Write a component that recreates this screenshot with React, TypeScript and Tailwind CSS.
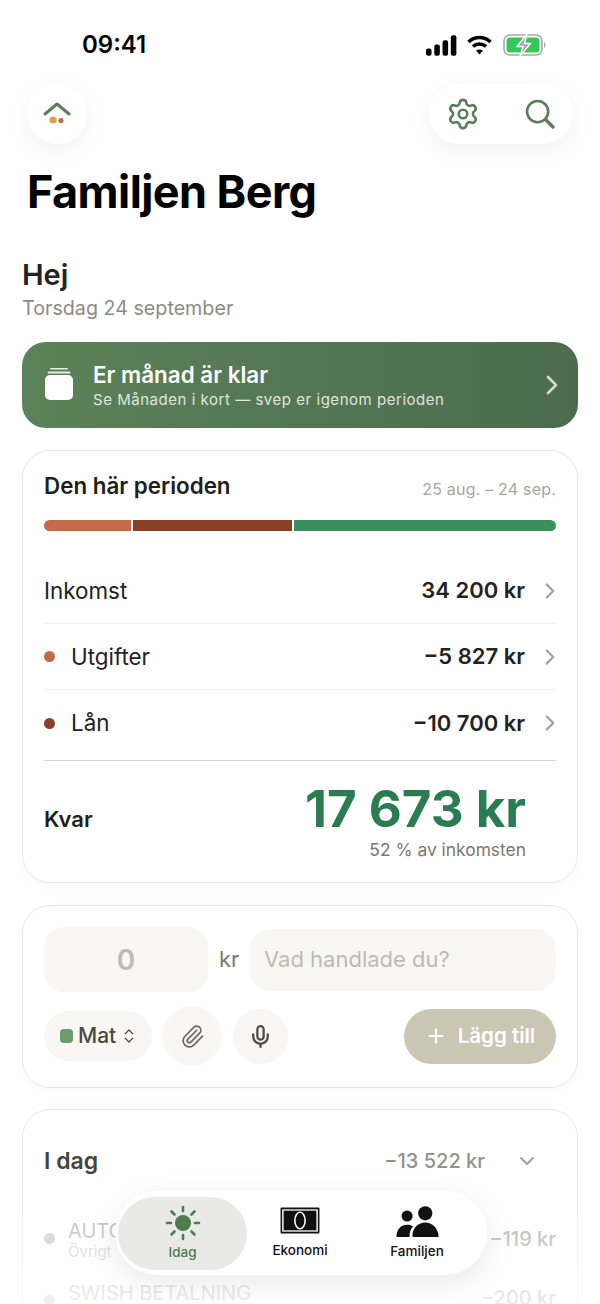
import { ChevronDown, ChevronRight, ChevronsUpDown, Mic, Paperclip, Plus, Settings } from 'lucide-react'

const rows = [
  { label: 'Inkomst', amount: '34 200 kr', dot: '' },
  { label: 'Utgifter', amount: '−5 827 kr', dot: 'bg-[#c4694a]' },
  { label: 'Lån', amount: '−10 700 kr', dot: 'bg-[#8a3f28]' },
]

function StatusBar() {
  return (
    <div className="flex h-[84px] items-start justify-between pl-[82px] pr-[54px] pt-[30px]">
      <span className="text-[24px] leading-[30px] font-semibold text-black">09:41</span>
      <div className="flex items-center gap-[9px] pt-[4px]">
        <svg width="31" height="21" viewBox="0 0 30 20" fill="#000">
          <rect x="0" y="13" width="5.4" height="7" rx="2" />
          <rect x="8" y="9" width="5.4" height="11" rx="2" />
          <rect x="16" y="5" width="5.4" height="15" rx="2" />
          <rect x="24" y="0" width="5.4" height="20" rx="2" />
        </svg>
        <svg width="27" height="20" viewBox="0 0 26 20" fill="none" stroke="#000" strokeWidth="3.4">
          <path d="M2 7 C8 1 18 1 24 7" />
          <path d="M6.5 11.5 C10 8.2 16 8.2 19.5 11.5" />
          <path d="M13 19.5 L9.6 15.6 C11.6 14 14.4 14 16.4 15.6 Z" fill="#000" stroke="none" />
        </svg>
        <svg width="43" height="22" viewBox="0 0 43 22" fill="none" className="ml-[1px]">
          <rect x="1" y="1" width="38" height="20" rx="6" stroke="#a8a8a8" strokeWidth="1.6" />
          <rect x="3.5" y="3.5" width="33" height="15" rx="3.5" fill="#34c759" />
          <path d="M41 8 C43 8.5 43 13.5 41 14 Z" fill="#a8a8a8" />
          <path d="M24 0 L14 12.5 H20 L17 22 L27.5 9.5 H21.5 Z" fill="#a9a9a9" stroke="#fff" strokeWidth="1.4" />
        </svg>
      </div>
    </div>
  )
}

function Header() {
  return (
    <div className="flex items-center justify-between pl-[27px] pr-[27px]">
      <div className="flex h-[60px] w-[60px] items-center justify-center rounded-full bg-white shadow-[0_6px_24px_rgba(0,0,0,0.06)]">
        <svg width="28" height="24" viewBox="0 0 28 24" fill="none">
          <path d="M2 12 L14 2 L26 12" stroke="#5a7d5a" strokeWidth="3" strokeLinecap="round" strokeLinejoin="round" />
          <circle cx="10" cy="18" r="3.6" fill="#dd9f50" />
          <circle cx="18" cy="18.5" r="2.6" fill="#c4694a" />
        </svg>
      </div>
      <div className="flex h-[60px] w-[144px] items-center justify-between rounded-full bg-white pl-[17px] pr-[18px] shadow-[0_6px_24px_rgba(0,0,0,0.06)]">
        <Settings size={34} strokeWidth={1.8} className="text-[#5a7d5a]" />
        <svg width="30" height="30" viewBox="0 0 30 30" fill="none" stroke="#5a7d5a" strokeWidth="2.6" strokeLinecap="round">
          <circle cx="12.6" cy="12.6" r="10.6" />
          <path d="M20.4 20.4 L28 28" strokeWidth="3.4" />
        </svg>
      </div>
    </div>
  )
}

function PeriodCard() {
  return (
    <section className="mt-[22px] h-[433px] rounded-[28px] border border-[#e9e7e1] bg-white px-[21px] shadow-[0_4px_14px_rgba(0,0,0,0.025)]">
      <div className="flex items-center justify-between pt-[20px]">
        <span className="text-[22.4px] leading-[30px] font-semibold text-[#1e1e1c]">Den här perioden</span>
        <span className="pt-[5px] text-[16px] tracking-[0.2px] text-[#a8a69c]">25 aug. – 24 sep.</span>
      </div>
      <div className="mt-[19px] flex h-[11px] gap-[2px] overflow-hidden rounded-full">
        <div className="w-[87px] bg-[#c4694a]" />
        <div className="w-[159px] bg-[#8a3f28]" />
        <div className="flex-1 bg-[#3a8f5c]" />
      </div>
      <div className="mt-[27px]">
        {rows.map((r, i) => (
          <div key={r.label} className={`flex h-[66px] items-center ${i < 2 ? 'border-b border-[#f2f1ed]' : ''}`}>
            {r.dot && <span className={`mr-[16px] h-[11px] w-[11px] rounded-full ${r.dot}`} />}
            <span className="flex-1 text-[22.4px] text-[#23231f]">{r.label}</span>
            <span className="text-[22px] font-semibold text-[#23231f]">{r.amount}</span>
            <ChevronRight size={26} strokeWidth={2} className="ml-[12px] -mr-[7px] text-[#a3a195]" />
          </div>
        ))}
      </div>
      <div className="mt-[4px] flex h-[116px] items-start justify-between border-t border-[#d6d4cb]">
        <span className="pt-[44px] text-[22px] leading-[28px] font-semibold text-[#1e1e1c]">Kvar</span>
        <div className="mr-[30px] flex flex-col items-end pt-[18px]">
          <span className="text-[51px] leading-[60px] font-bold text-[#2a7d50]">17 673 kr</span>
          <span className="text-[17.4px] leading-[22px] text-[#7b796f]">52 % av inkomsten</span>
        </div>
      </div>
    </section>
  )
}

function AddCard() {
  return (
    <section className="mt-[22px] h-[183px] rounded-[28px] border border-[#e9e7e1] bg-white px-[21px] pt-[21px] shadow-[0_4px_14px_rgba(0,0,0,0.025)]">
      <div className="flex items-center">
        <div className="flex h-[65px] w-[164px] items-center justify-center rounded-[20px] bg-[#f8f7f3] text-[28px] font-semibold text-[#bdbbb2]">0</div>
        <span className="ml-[11px] w-[31px] text-[22px] text-[#7b796f]">kr</span>
        <div className="flex h-[62px] flex-1 items-center rounded-[20px] bg-[#f8f7f3] pl-[14px] text-[22px] text-[#bdbbb2]">Vad handlade du?</div>
      </div>
      <div className="mt-[14px] flex items-center">
        <div className="flex h-[50px] w-[108px] items-center rounded-full bg-[#f8f7f3] pl-[16px]">
          <span className="h-[14px] w-[13px] rounded-[4px] bg-[#6f9a70]" />
          <span className="ml-[5px] text-[21px] font-medium text-[#4a4a42]">Mat</span>
          <ChevronsUpDown size={18} strokeWidth={1.6} className="ml-[4px] text-[#4a4a42]" />
        </div>
        <div className="ml-[10px] flex h-[60px] w-[60px] items-center justify-center rounded-full bg-[#f8f7f3]">
          <Paperclip size={25} strokeWidth={1.6} className="text-[#6a685e]" />
        </div>
        <div className="ml-[11px] flex h-[55px] w-[55px] items-center justify-center rounded-full bg-[#f8f7f3]">
          <Mic size={25} strokeWidth={2.2} className="text-[#4f4d45]" />
        </div>
        <div className="ml-auto flex h-[55px] w-[152px] items-center justify-center gap-[11px] rounded-full bg-[#ccc6b5] text-[20.5px] font-semibold text-white">
          <Plus size={22} strokeWidth={2.4} />
          <span>Lägg till</span>
        </div>
      </div>
    </section>
  )
}

function TodayCard() {
  return (
    <section className="mt-[21px] h-[260px] rounded-[28px] border border-[#e9e7e1] bg-white px-[21px] pt-[34px]">
      <div className="flex items-center">
        <span className="flex-1 text-[23px] font-semibold text-[#45443d]">I dag</span>
        <span className="text-[20px] font-medium text-[#94928a]">−13 522 kr</span>
        <ChevronDown size={24} strokeWidth={2} className="ml-[30px] mr-[17px] text-[#a3a195]" />
      </div>
      <div className="mt-[40px] flex items-start opacity-70">
        <span className="mt-[14px] h-[11px] w-[11px] rounded-full bg-[#b3b1a9]" />
        <div className="ml-[13px] flex-1">
          <div className="text-[20px] leading-[24px] text-[#9a9890]">AUTOGIRO</div>
          <div className="text-[15px] leading-[18px] text-[#bdbbb2]">Övrigt</div>
        </div>
        <span className="pt-[5px] text-[20px] font-medium text-[#8a8880]">−119 kr</span>
      </div>
      <div className="mt-[20px] flex items-start opacity-60">
        <span className="mt-[14px] h-[11px] w-[11px] rounded-full bg-[#b3b1a9]" />
        <div className="ml-[13px] flex-1 text-[20px] leading-[24px] text-[#9a9890]">SWISH BETALNING</div>
        <span className="mt-[2px] text-[20px] font-medium text-[#8a8880]">−200 kr</span>
      </div>
    </section>
  )
}

function BottomNav() {
  return (
    <>
      <div className="absolute inset-x-0 bottom-0 h-[130px] bg-gradient-to-b from-white/0 to-white/70" />
      <nav className="absolute bottom-[29px] left-[115px] flex h-[84px] w-[372px] items-center rounded-[42px] bg-white pl-[3px] text-[#111] shadow-[0_8px_30px_rgba(0,0,0,0.09)]">
        <div className="flex h-[73px] w-[129px] flex-col items-center justify-center rounded-[37px] bg-[#e9e9e7]">
          <svg width="36" height="36" viewBox="0 0 34 36" fill="none" stroke="#4f7d4f" strokeWidth="2.6" strokeLinecap="round">
            <circle cx="17" cy="18" r="8" fill="#4f7d4f" stroke="none" />
            <path d="M17 2v4M17 30v4M1 18h4M29 18h4M5.5 6.5l3 3M25.5 26.5l3 3M28.5 6.5l-3 3M8.5 26.5l-3 3" />
          </svg>
          <span className="mt-[3px] text-[13.5px] leading-[17px] font-medium text-[#4f7d4f]">Idag</span>
        </div>
        <div className="flex w-[106px] flex-col items-center">
          <svg width="40" height="27" viewBox="0 0 36 27" preserveAspectRatio="none">
            <rect x="0.5" y="0.5" width="35" height="26" rx="1" fill="#111" />
            <rect x="2.6" y="3" width="30.8" height="21" fill="none" stroke="#fff" strokeWidth="1.3" />
            <ellipse cx="18" cy="13.5" rx="4.6" ry="8.4" fill="none" stroke="#fff" strokeWidth="1.4" />
          </svg>
          <span className="mt-[8px] text-[13.5px] leading-[17px] font-medium">Ekonomi</span>
        </div>
        <div className="flex w-[128px] flex-col items-center">
          <svg width="43" height="31" viewBox="0 0 38 28" fill="#111">
            <circle cx="26" cy="6.6" r="6.4" />
            <circle cx="9.6" cy="9" r="5" />
            <path d="M14.6 28 C13.6 21 19 15 26 15 C33 15 38 21 38 28 Z" />
            <path d="M0 28 C0 21 4 17 10 17 C12 17 13.5 17.5 15 18.4 C12.8 20.8 11.6 24 11.8 28 Z" />
          </svg>
          <span className="mt-[6px] text-[13.5px] leading-[17px] font-medium">Familjen</span>
        </div>
      </nav>
    </>
  )
}

export default function App() {
  return (
    <div className="relative h-[1304px] w-[600px] overflow-hidden bg-white font-['Inter',sans-serif]">
      <StatusBar />
      <Header />
      <h1 className="mt-[20px] pl-[27px] text-[45px] leading-[56px] font-bold tracking-[-0.6px] text-black">Familjen Berg</h1>
      <main className="mt-[37px] px-[22px]">
        <h2 className="text-[29px] leading-[36px] font-semibold text-[#23231f]">Hej</h2>
        <p className="mt-[2px] text-[19.7px] leading-[26px] text-[#8d8b80]">Torsdag 24 september</p>
        <div className="mt-[21px] flex h-[86px] items-center rounded-[24px] bg-gradient-to-r from-[#5c8259] to-[#4c6c4d] pl-[22px] pr-[10px] text-white">
          <svg width="30" height="34" viewBox="0 0 30 34" fill="white">
            <rect x="6" y="0" width="18" height="1.6" rx="0.8" opacity="0.85" />
            <rect x="3.5" y="3.5" width="23" height="2" rx="1" opacity="0.85" />
            <rect x="1" y="7" width="28" height="25" rx="5" />
          </svg>
          <div className="ml-[19px] flex-1">
            <div className="text-[22.4px] leading-[28px] font-semibold">Er månad är klar</div>
            <div className="mt-[1px] text-[15px] leading-[20px] tracking-[0.53px] text-white/80">Se Månaden i kort — svep er igenom perioden</div>
          </div>
          <ChevronRight size={32} strokeWidth={2} className="text-white/75" />
        </div>
        <PeriodCard />
        <AddCard />
        <TodayCard />
      </main>
      <BottomNav />
    </div>
  )
}
